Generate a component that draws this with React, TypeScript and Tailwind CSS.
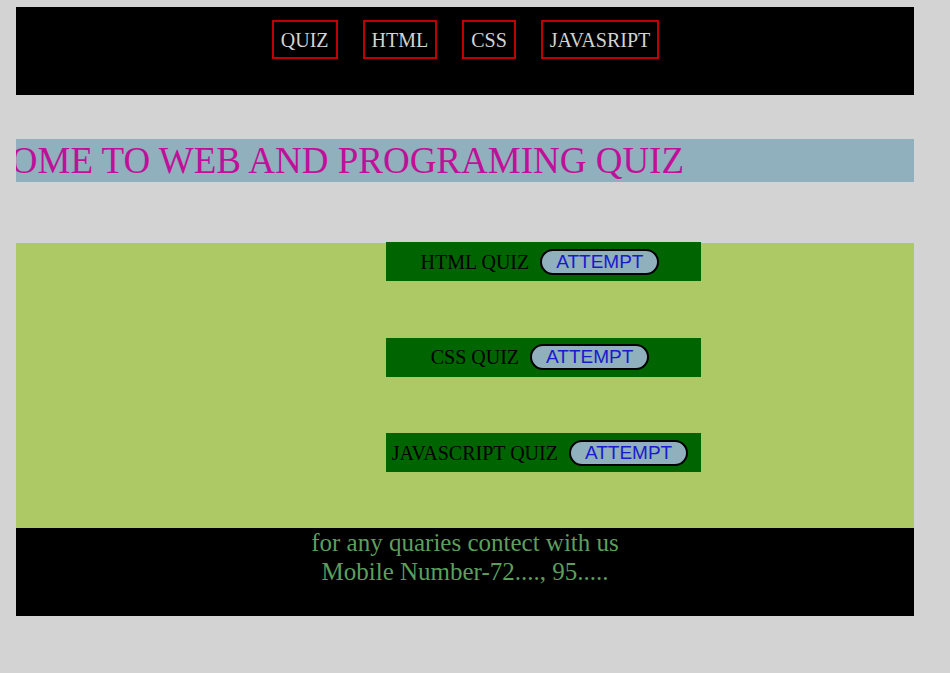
import React from "react";

const navItems = ["QUIZ", "HTML", "CSS", "JAVASRIPT"];
const quizzes = ["HTML QUIZ", "CSS QUIZ", "JAVASCRIPT QUIZ"];

const App = () => {
  return (
    <div className="min-h-[673px] bg-[#d3d3d3] pt-[7px] font-['Liberation_Serif',serif]">
      <div className="ml-[16px] w-[898px]">
        <header className="h-[88px] bg-black pt-[13px]">
          <nav className="flex justify-center gap-[25px] pl-[1px]">
            {navItems.map((item) => (
              <span
                key={item}
                className="border-2 border-[#c00000] px-[7px] h-[39px] leading-[36px] text-[20px] text-[#d3d3d3]"
              >
                {item}
              </span>
            ))}
          </nav>
        </header>

        <div className="mt-[44px] h-[43px] overflow-hidden bg-[#8fb0bc]">
          <div className="ml-[-110px] whitespace-nowrap text-[37px] leading-[43px] text-[#c0109a]">
            WELCOME TO WEB AND PROGRAMING QUIZ
          </div>
        </div>

        <section className="mt-[61px] h-[285px] bg-[#acc965] flex flex-col gap-[56.5px] pl-[370px]">
          {quizzes.map((q, i) => (
            <div
              key={q}
              className={
                i === 0
                  ? "-mt-[1px] flex h-[39px] w-[315px] items-center justify-center gap-[11px] bg-[#006400] pr-[7px]"
                  : "flex h-[39px] w-[315px] items-center justify-center gap-[11px] bg-[#006400] pr-[7px]"
              }
            >
              <span className="text-[20px] text-black">{q}</span>
              <button className="h-[26px] rounded-full border-2 border-black bg-[#8fb0bc] px-[14px] font-['Liberation_Sans',sans-serif] text-[19px] leading-[22px] text-[#1a1acc]">
                ATTEMPT
              </button>
            </div>
          ))}
        </section>

        <footer className="h-[88px] bg-black text-center text-[25px] leading-[29px] text-[#5c9f5c]">
          <p>for any quaries contect with us</p>
          <p>Mobile Number-72...., 95.....</p>
        </footer>
      </div>
    </div>
  );
};

export default App;
